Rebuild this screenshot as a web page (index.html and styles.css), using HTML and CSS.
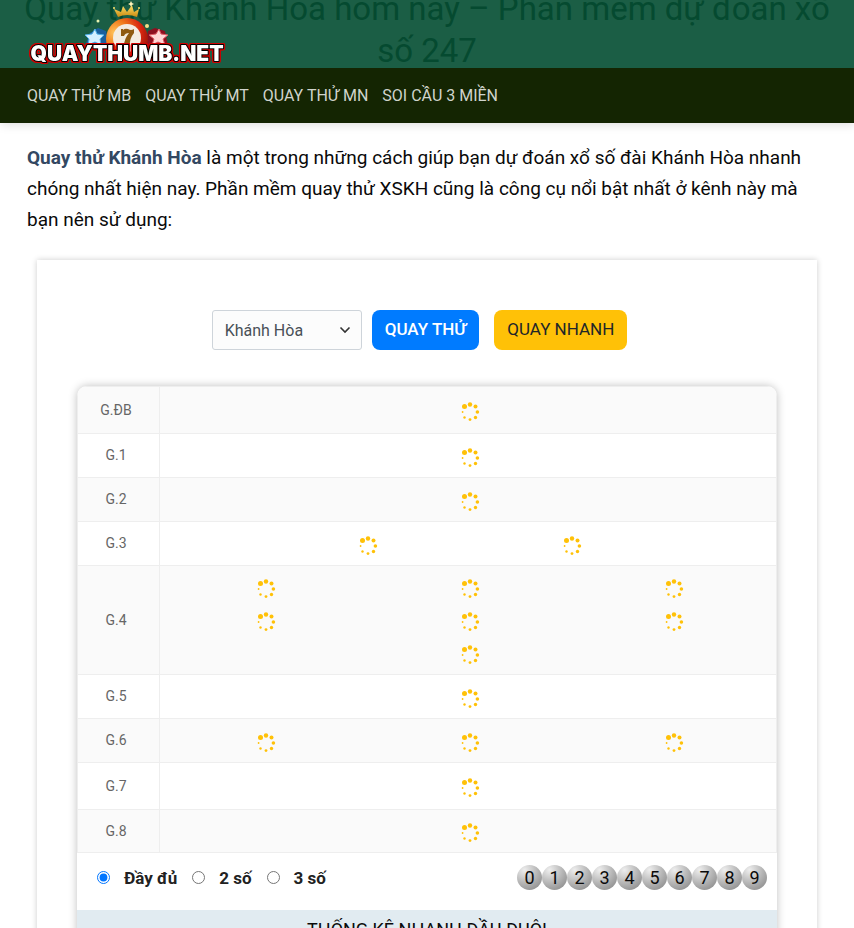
FILE: index.html
```html
<!DOCTYPE html>
<html lang="vi">
<head>
  <meta charset="UTF-8" />
  <meta name="viewport" content="width=device-width, initial-scale=1" />
  <title>Quay thử Khánh Hòa</title>
  <link rel="stylesheet" href="styles.css">
</head>
<body>
  <!-- spinner shared by every prize cell -->
  <svg class="defs" aria-hidden="true">
    <symbol id="spinner" viewBox="0 0 20 20">
      <circle cx="4.5" cy="4.5" r="2.5" />
      <circle cx="10" cy="2.5" r="2.2" />
      <circle cx="15.5" cy="4.5" r="2" />
      <circle cx="17.4" cy="10" r="1.8" />
      <circle cx="15.5" cy="15.5" r="1.7" />
      <circle cx="10" cy="17.6" r="1.4" />
      <circle cx="4.5" cy="15.5" r="1.2" />
      <circle cx="2.6" cy="10" r="0.9" />
    </symbol>
  </svg>

  <header class="header">
    <h1 class="page-title">Quay thử Khánh Hòa hôm nay – Phần mềm dự đoán xổ số 247</h1>
    <div class="header-main">
      <a class="logo" href="#">
        <svg width="200" height="68" viewBox="0 0 200 68">
          <defs>
            <radialGradient id="ball" cx="0.2" cy="0.35" r="0.9">
              <stop offset="0" stop-color="#ffc45a" />
              <stop offset="0.35" stop-color="#f07a1c" />
              <stop offset="0.7" stop-color="#d8260f" />
              <stop offset="1" stop-color="#8c0f0a" />
            </radialGradient>
            <linearGradient id="gold" x1="0" y1="0" x2="0" y2="1">
              <stop offset="0" stop-color="#ffe36b" />
              <stop offset="1" stop-color="#c98a10" />
            </linearGradient>
          </defs>
          <!-- blue star -->
          <path d="M58 46 L63 33 L71 28 L79 31 L82 46 Z" fill="#1a5f9e" />
          <path d="M68 29 L70 34 L77 35 L73 39 L74 45 L68 42 L61 45 L62 39 L58 35 L65 34 Z" fill="#d5f0ff" stroke="#4fb0e8" />
          <!-- red star -->
          <path d="M118 46 L121 31 L128 28 L138 31 L141 46 Z" fill="#8d1020" />
          <path d="M132 29 L134 34 L141 35 L136 39 L138 45 L131 42 L125 45 L127 39 L122 35 L129 34 Z" fill="#ffd6d6" stroke="#e05c66" />
          <!-- ball -->
          <circle cx="100" cy="39" r="21" fill="url(#ball)" />
          <circle cx="100" cy="38" r="14" fill="#f3ece2" />
          <path d="M94 29 V36 H97 Q98 33 102 33 Q97 39 97 46 H103 Q102 39 107 33 V29 Q104 31 101 29 Q98 28 96 30 V29 Z" fill="#8f5a12" />
          <!-- crown -->
          <path d="M91 17 L87 9 L94 12 L96 6 L100 12 L105 5 L107 12 L112 9 L110 17 Q100 13 91 17 Z" fill="url(#gold)" />
          <circle cx="87" cy="8" r="1" fill="#ffe36b" />
          <circle cx="112" cy="8" r="1" fill="#ffe36b" />
          <path d="M104 1 L105 3 L107 4 L105 5 L104 7 L103 5 L101 4 L103 3 Z" fill="#fff3b8" />
          <circle cx="71" cy="21" r="1.5" fill="#e8f3b0" />
          <circle cx="120" cy="26" r="2" fill="#f7e08a" />
          <text class="logo-text" x="100" y="61">QUAYTHUMB.NET</text>
        </svg>
      </a>
    </div>
    <nav class="nav">
      <a href="#">QUAY THỬ MB</a>
      <a href="#">QUAY THỬ MT</a>
      <a href="#">QUAY THỬ MN</a>
      <a href="#">SOI CẦU 3 MIỀN</a>
    </nav>
  </header>

  <main class="container">
    <p class="intro"><a href="#">Quay thử Khánh Hòa</a> là một trong những cách giúp bạn dự đoán xổ số đài Khánh Hòa nhanh chóng nhất hiện nay. Phần mềm quay thử XSKH cũng là công cụ nổi bật nhất ở kênh này mà bạn nên sử dụng:</p>

    <section class="card">
      <form class="controls">
        <select class="province" aria-label="Chọn tỉnh">
          <option>Khánh Hòa</option>
        </select>
        <button type="button" class="btn btn-primary">QUAY THỬ</button>
        <button type="button" class="btn btn-warning">QUAY NHANH</button>
      </form>

      <div class="result">
        <table class="prizes">
          <tbody>
            <tr class="tall"><th scope="row">G.ĐB</th><td><div class="balls"><svg><use href="#spinner" /></svg></div></td></tr>
            <tr><th scope="row">G.1</th><td><div class="balls"><svg><use href="#spinner" /></svg></div></td></tr>
            <tr><th scope="row">G.2</th><td><div class="balls"><svg><use href="#spinner" /></svg></div></td></tr>
            <tr><th scope="row">G.3</th><td><div class="balls"><svg><use href="#spinner" /></svg><svg><use href="#spinner" /></svg></div></td></tr>
            <tr><th scope="row">G.4</th><td><div class="balls"><svg><use href="#spinner" /></svg><svg><use href="#spinner" /></svg><svg><use href="#spinner" /></svg><svg><use href="#spinner" /></svg><svg><use href="#spinner" /></svg><svg><use href="#spinner" /></svg><svg><use href="#spinner" /></svg></div></td></tr>
            <tr><th scope="row">G.5</th><td><div class="balls"><svg><use href="#spinner" /></svg></div></td></tr>
            <tr><th scope="row">G.6</th><td><div class="balls"><svg><use href="#spinner" /></svg><svg><use href="#spinner" /></svg><svg><use href="#spinner" /></svg></div></td></tr>
            <tr class="tall"><th scope="row">G.7</th><td><div class="balls"><svg><use href="#spinner" /></svg></div></td></tr>
            <tr><th scope="row">G.8</th><td><div class="balls"><svg><use href="#spinner" /></svg></div></td></tr>
          </tbody>
        </table>

        <div class="options">
          <div class="digits">
            <input type="radio" name="digits" id="full" checked><label for="full">Đầy đủ</label>
            <input type="radio" name="digits" id="two"><label for="two">2 số</label>
            <input type="radio" name="digits" id="three"><label for="three">3 số</label>
          </div>
          <div class="numbers">
            <span>0</span><span>1</span><span>2</span><span>3</span><span>4</span><span>5</span><span>6</span><span>7</span><span>8</span><span>9</span>
          </div>
        </div>

        <h2 class="stats-title">THỐNG KÊ NHANH ĐẦU ĐUÔI</h2>
      </div>
    </section>
  </main>
</body>
</html>
```
FILE: styles.css
```css
* {
  box-sizing: border-box;
}
body {
  margin: 0;
  background: #fff;
  color: #0a0a0a;
  font-family: Roboto, "Liberation Sans", sans-serif;
  font-size: 18px;
}
.defs {
  position: absolute;
  width: 0;
  height: 0;
}

/* header */
.header {
  position: relative;
  background: #1b5e45;
  box-shadow: 1px 1px 10px rgba(0, 0, 0, 0.15);
}
/* heading shows through behind the logo bar */
.page-title {
  position: absolute;
  top: -12px;
  left: 0;
  right: 0;
  margin: 0;
  padding: 0 16px;
  color: #054a30;
  font-size: 33px;
  font-weight: 400;
  line-height: 42px;
  text-align: center;
}
.header-main {
  position: relative;
  height: 68px;
  padding: 0 27px;
}
.logo svg {
  display: block;
}
.logo-text {
  fill: #fff;
  stroke: #000;
  stroke-width: 2px;
  stroke-linejoin: round;
  paint-order: stroke;
  font-family: Inter, Roboto, sans-serif;
  font-size: 21px;
  font-weight: 900;
  text-anchor: middle;
  filter: drop-shadow(1px 0 0 #d00000) drop-shadow(-1px 0 0 #d00000) drop-shadow(0 1px 0 #d00000) drop-shadow(0 -1px 0 #d00000);
}
.nav {
  position: relative;
  display: flex;
  gap: 14px;
  padding: 1px 27px 0;
  background: #142502;
}
.nav a {
  color: #d0d4cc;
  font-size: 16px;
  line-height: 54px;
  text-decoration: none;
}

/* content */
.container {
  padding: 19px 27px 0;
}
.intro {
  margin: 0 0 25px;
  font-size: 19px;
  line-height: 31px;
}
.intro a {
  color: #334862;
  font-weight: 700;
  text-decoration: none;
}
.card {
  margin: 0 10px;
  padding: 50px 40px 40px;
  box-shadow: 0 0 6px rgba(0, 0, 0, 0.2);
}
.controls {
  display: flex;
  justify-content: center;
  margin: 0 0 36px;
}
.province {
  width: 150px;
  height: 40px;
  margin-right: 10px;
  padding: 0 12px;
  border: 1px solid #ced4da;
  border-radius: 3px;
  appearance: none;
  background: #fcfcfc url("data:image/svg+xml,%3Csvg xmlns='http://www.w3.org/2000/svg' width='12' height='8' fill='none' stroke='%23333' stroke-width='1.6'%3E%3Cpath d='M1.5 1.5 6 6l4.5-4.5'/%3E%3C/svg%3E") no-repeat right 10px center;
  color: #495057;
  font-family: inherit;
  font-size: 16px;
}
.btn {
  height: 40px;
  margin-right: 15px;
  padding: 0 13px 2px;
  border: 0;
  border-radius: 8px;
  font-family: inherit;
  font-size: 17px;
}
.btn-primary {
  background: #007bff;
  color: #fff;
  font-weight: 500;
}
.btn-warning {
  background: #ffc107;
  color: #212529;
}

/* result table */
.result {
  overflow: hidden;
  border-radius: 10px 10px 0 0;
  box-shadow: 0 0 8px rgba(0, 0, 0, 0.25);
}
.prizes {
  width: 100%;
  border: 1px solid #eee;
  border-bottom: 0;
  border-spacing: 0;
}
.prizes tr {
  height: 44px;
}
.prizes .tall {
  height: 47px;
}
.prizes tr:last-child {
  height: 43px;
}
.prizes tr:nth-child(odd) {
  background: #fafafa;
}
.prizes th,
.prizes td {
  padding: 0;
  border-bottom: 1px solid #eee;
}
.prizes th {
  width: 82px;
  padding: 0 5px 1px 0;
  border-right: 1px solid #eee;
  color: #666;
  font-size: 14px;
  font-weight: 400;
}
.balls {
  display: flex;
  flex-wrap: wrap;
  justify-content: center;
  padding: 7px 0 2px 4px;
}
.balls svg {
  flex: 0 0 calc(100% / 3);
  height: 20px;
  margin: 6px 0 7px;
  fill: #ffc107;
}

/* row under the table */
.options {
  display: flex;
  align-items: center;
  justify-content: space-between;
  padding: 12px 10px 20px 20px;
}
.digits {
  display: flex;
  align-items: center;
}
.digits input {
  width: 13px;
  height: 13px;
  margin: 0 14px 0 0;
  accent-color: #0075ff;
}
.digits label {
  margin-right: 15px;
  color: #222;
  font-size: 17px;
  font-weight: 700;
}
.numbers {
  display: flex;
}
.numbers span {
  width: 25px;
  height: 25px;
  border-radius: 50%;
  background: radial-gradient(circle at 30% 20%, #eee, #b5b5b5 50%, #808080);
  line-height: 25px;
  text-align: center;
}
.stats-title {
  margin: 0;
  padding: 6px 10px;
  background: #e1ebf1;
  font-size: 18px;
  font-weight: 400;
  line-height: 28px;
  text-align: center;
}
```
